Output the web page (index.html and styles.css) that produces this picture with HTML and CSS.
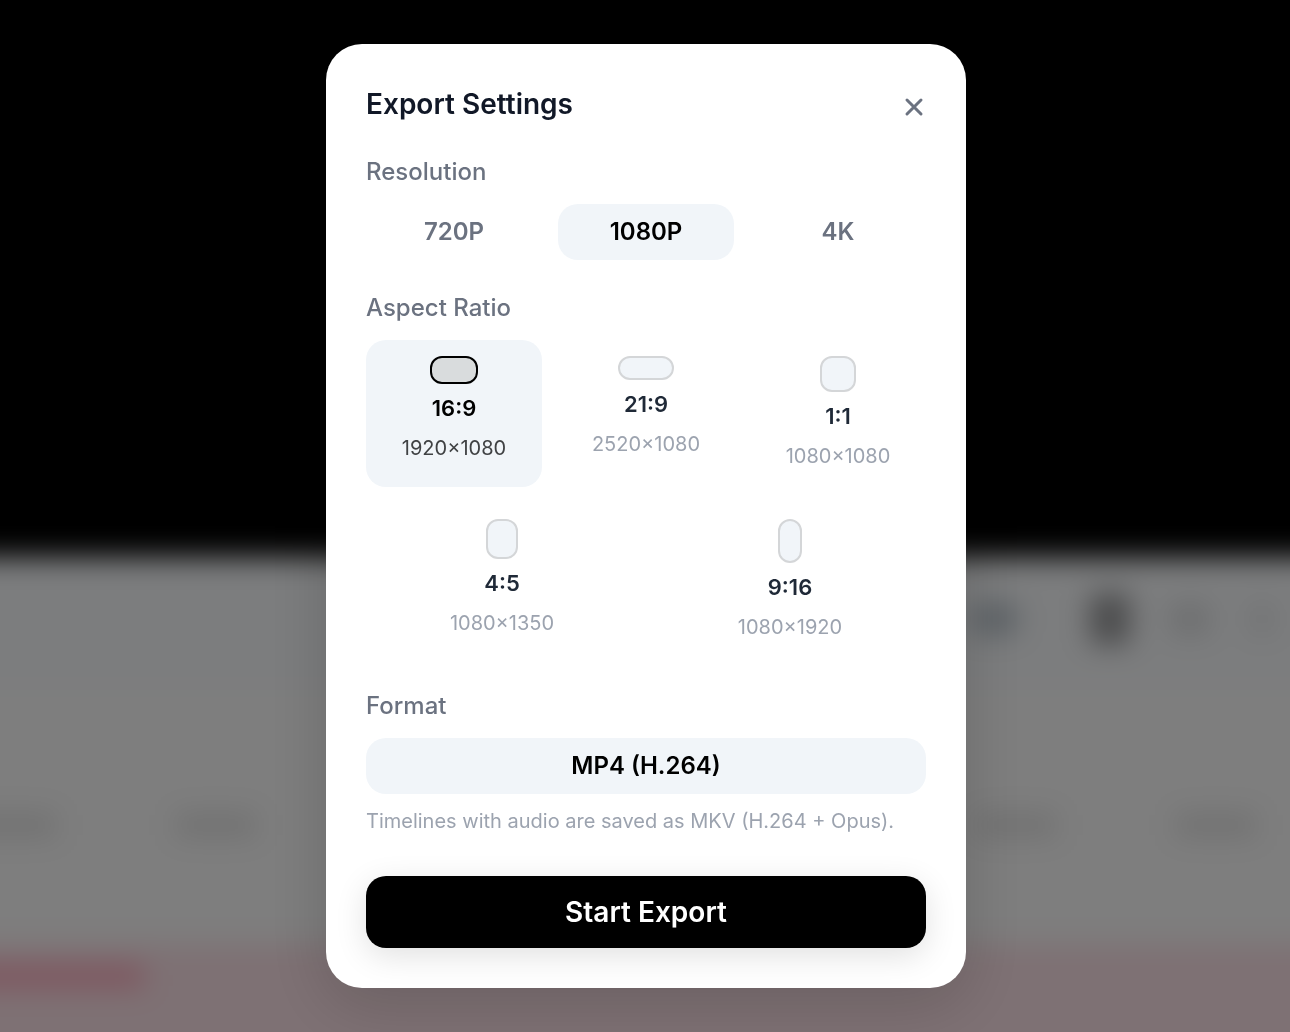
FILE: index.html
```html
<!DOCTYPE html>
<html lang="en">
<head>
<meta charset="utf-8">
<meta name="viewport" content="width=device-width, initial-scale=1">
<title>Export Settings</title>
<link rel="stylesheet" href="styles.css">
</head>
<body>
<div class="editor" aria-hidden="true">
  <div class="stage"></div>
  <div class="toolbar">
    <span class="tool tool-blue"></span>
    <span class="tool tool-dark"></span>
    <span class="tool tool-light"></span>
    <span class="tool tool-small"></span>
  </div>
  <div class="ruler">
    <span class="tick"></span><span class="tick"></span><span class="tick"></span><span class="tick"></span><span class="tick"></span><span class="tick"></span><span class="tick"></span>
  </div>
  <div class="track"><span class="clip-name"></span></div>
</div>
<div class="overlay">
  <main class="dialog" role="dialog" aria-modal="true" aria-labelledby="title">
    <header class="header">
      <h1 class="title" id="title">Export Settings</h1>
      <button class="close" type="button" aria-label="Close">
        <svg class="close-icon" viewBox="0 0 24 24" aria-hidden="true"><path d="M5 6 19 20M19 6 5 20"/></svg>
      </button>
    </header>
    <section class="section" aria-labelledby="resolution">
      <h2 class="label" id="resolution">Resolution</h2>
      <div class="options">
        <button class="option" type="button" aria-pressed="false">720P</button>
        <button class="option selected" type="button" aria-pressed="true">1080P</button>
        <button class="option" type="button" aria-pressed="false">4K</button>
      </div>
    </section>
    <section class="section" aria-labelledby="aspect">
      <h2 class="label" id="aspect">Aspect Ratio</h2>
      <div class="ratios">
        <div class="options">
          <button class="ratio selected" type="button" aria-pressed="true"><span class="shape shape-16-9"></span><span class="ratio-name">16:9</span><span class="ratio-size">1920×1080</span></button>
          <button class="ratio" type="button" aria-pressed="false"><span class="shape shape-21-9"></span><span class="ratio-name">21:9</span><span class="ratio-size">2520×1080</span></button>
          <button class="ratio" type="button" aria-pressed="false"><span class="shape shape-1-1"></span><span class="ratio-name">1:1</span><span class="ratio-size">1080×1080</span></button>
        </div>
        <div class="options">
          <button class="ratio" type="button" aria-pressed="false"><span class="shape shape-4-5"></span><span class="ratio-name">4:5</span><span class="ratio-size">1080×1350</span></button>
          <button class="ratio" type="button" aria-pressed="false"><span class="shape shape-9-16"></span><span class="ratio-name">9:16</span><span class="ratio-size">1080×1920</span></button>
        </div>
      </div>
    </section>
    <section class="section" aria-labelledby="format">
      <h2 class="label" id="format">Format</h2>
      <div class="options">
        <button class="option selected" type="button" aria-pressed="true">MP4 (H.264)</button>
      </div>
      <p class="note">Timelines with audio are saved as MKV (H.264 + Opus).</p>
    </section>
    <button class="start" type="button">Start Export</button>
  </main>
</div>
</body>
</html>
```
FILE: styles.css
```css
*, *::before, *::after { box-sizing: border-box; }

body {
  margin: 0;
  font-family: Inter, "Liberation Sans", sans-serif;
  background: #000;
}

h1, h2, p { margin: 0; }

button {
  padding: 0;
  border: 0;
  background: none;
  font: inherit;
  color: inherit;
  cursor: pointer;
}

/* Editor behind the dialog; runs past the window so its blurred edges stay hidden */
.editor {
  position: fixed;
  inset: 0 -40px -40px;
  display: flex;
  flex-direction: column;
  background: #f8fafc;
  filter: blur(14px);
}

.stage { flex: 0 0 54vh; background: #000; }

.toolbar {
  display: flex;
  justify-content: flex-end;
  align-items: center;
  gap: 40px;
  height: 124px;
  padding-right: 56px;
}

.tool { width: 40px; height: 32px; border-radius: 8px; }
.tool-blue { width: 48px; margin-right: 32px; background: #bcc6ce; }
.tool-dark { height: 52px; background: #98999b; }
.tool-light { background: #dcdee0; }
.tool-small { width: 24px; background: #e4e6e8; }

.ruler {
  flex: 1;
  display: flex;
  gap: 120px;
  align-items: center;
  padding-top: 24px;
  background: #fcfcfc;
}

.tick { flex: 0 0 80px; height: 24px; background: #e2e2e2; }
.tick:first-child { flex-basis: 96px; }

.track {
  height: 128px;
  padding-top: 20px;
  background: #fce2e8;
}

.clip-name {
  display: block;
  width: 184px;
  height: 24px;
  background: #fcacbe;
}

/* Dialog */
.overlay {
  position: relative;
  display: flex;
  align-items: center;
  justify-content: center;
  min-height: 100vh;
  padding: 24px 24px 24px 26px;
  background: rgba(0, 0, 0, 0.5);
}

.dialog {
  display: flex;
  flex-direction: column;
  gap: 28px;
  width: 100%;
  max-width: 640px;
  padding: 40px;
  border-radius: 36px;
  background: #fff;
  box-shadow: 0 16px 64px rgba(0, 0, 0, 0.16);
}

.header {
  display: flex;
  justify-content: space-between;
  height: 44px;
  margin-bottom: -4px;
}

.title {
  font-size: 28px;
  font-weight: 600;
  line-height: 40px;
  color: #111827;
}

.close { display: flex; align-items: center; color: #6b7280; }

.close-icon {
  width: 24px;
  height: 24px;
  fill: none;
  stroke: currentColor;
  stroke-width: 3;
  stroke-linecap: round;
}

.label {
  margin-bottom: 12px;
  font-size: 24px;
  font-weight: 500;
  line-height: 40px;
  color: #6b7280;
}

.options { display: flex; gap: 16px; }

.option {
  flex: 1;
  height: 56px;
  padding-bottom: 2px;
  border-radius: 20px;
  font-size: 24px;
  font-weight: 600;
  color: #6b7280;
}

.option.selected { background: #f1f5f9; color: #000; }

.ratios { display: flex; flex-direction: column; gap: 16px; }

.ratio {
  flex: 1;
  display: flex;
  flex-direction: column;
  align-items: center;
  gap: 8px;
  padding: 16px 0;
  border-radius: 20px;
}

.ratio.selected { background: #f1f5f9; }

.shape {
  border: 2px solid #d4d6d8;
  border-radius: 12px;
  background: #f1f5f9;
}

.selected .shape { border-color: #000; background: #d9dcdd; }

.shape-16-9 { width: 48px; height: 28px; }
.shape-21-9 { width: 56px; height: 24px; }
.shape-1-1 { width: 36px; height: 36px; }
.shape-4-5 { width: 32px; height: 40px; }
.shape-9-16 { width: 24px; height: 44px; }

.ratio-name {
  font-size: 22px;
  font-weight: 600;
  line-height: 33px;
  color: #1f2937;
}

.ratio-size {
  font-size: 20px;
  line-height: 30px;
  color: #9ca3af;
}

.selected .ratio-name { color: #000; }
.selected .ratio-size { color: #404244; }

.note {
  margin-top: 12px;
  font-size: 20px;
  line-height: 30px;
  color: #9ca3af;
}

.start {
  height: 72px;
  margin-top: 12px;
  border-radius: 20px;
  background: #000;
  font-size: 28px;
  font-weight: 600;
  color: #fff;
  box-shadow: 0 8px 32px rgba(0, 0, 0, 0.12);
}
```
